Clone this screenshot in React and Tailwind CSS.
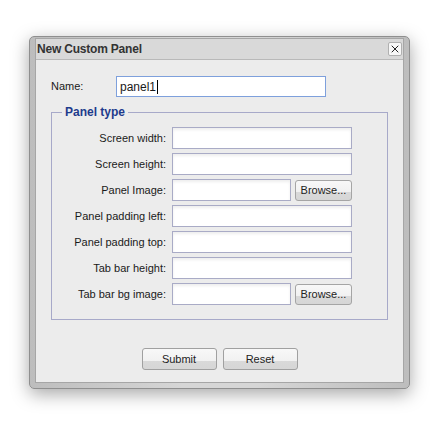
import { X } from 'lucide-react';

const rows = [
  { label: 'Screen width:' },
  { label: 'Screen height:' },
  { label: 'Panel Image:', browse: true },
  { label: 'Panel padding left:' },
  { label: 'Panel padding top:' },
  { label: 'Tab bar height:' },
  { label: 'Tab bar bg image:', browse: true },
];

const btnBg =
  'bg-[linear-gradient(#f8f8f8_0%,#f1f1f1_58%,#d9d9d9_58%,#d6d6d6_100%)]';

function Field({ short }) {
  return (
    <input
      type="text"
      className={`h-[22px] ${short ? 'w-[119px]' : 'w-[180px]'} border border-[#a9abc6] bg-white shadow-[inset_0_2px_3px_rgba(0,0,0,0.07)] outline-none`}
    />
  );
}

export default function App() {
  return (
    <div className="min-h-screen bg-white pt-[36px] pl-[29px] font-['Liberation_Sans',Arial,sans-serif] text-[11px] text-[#1a1a1a]">
      <div className="w-[381px] h-[353px] rounded-[5px] border border-[#8f8f8f] bg-[linear-gradient(90deg,#bdbdbd,#d6d6d6_40%,#d6d6d6_60%,#bdbdbd)] pt-[1px] px-[5px] pb-[5px] shadow-[0_5px_18px_rgba(0,0,0,0.35)]">
        <div className="h-full flex flex-col border border-[#a6a6a6]">
          <div className="h-[21px] flex items-center justify-between bg-[#d9d9d9] border-b border-[#b9b9b9] pl-[1px] pr-[1px]">
            <span className="font-bold text-[12px] text-[#333] tracking-[-0.2px]">New Custom Panel</span>
            <button className="w-[14px] h-[14px] flex items-center justify-center rounded-[2px] border border-[#b0b0b0] bg-[#f7f7f7]">
              <X className="w-[12px] h-[12px] text-[#222]" strokeWidth={2} />
            </button>
          </div>
          <div className="flex-1 bg-[#ececec] px-[15px] pt-[16px]">
            <div className="flex items-center">
              <span className="w-[65px]">Name:</span>
              <div className="w-[210px] h-[21px] flex items-center border border-[#7ea0dc] bg-white pl-[3px] text-[12px]">
                <span>panel1</span>
                <span className="w-px h-[14px] bg-black ml-[1px]" />
              </div>
            </div>
            <fieldset className="mt-[6px] border border-[#a7a9c9] pt-[6px] pb-[14px]">
              <legend className="ml-[10px] px-[3px] font-bold text-[12px] text-[#1e3b8c]">Panel type</legend>
              <div className="flex flex-col gap-[4px]">
                {rows.map((r) => (
                  <div key={r.label} className="flex items-center">
                    <span className="w-[114px] text-right">{r.label}</span>
                    <div className="ml-[6px] flex items-center gap-[4px]">
                      <Field short={r.browse} />
                      {r.browse && (
                        <button
                          className={`w-[57px] h-[21px] rounded-[3px] border border-[#a5a5a5] ${btnBg} text-[11px] text-[#222]`}
                        >
                          Browse...
                        </button>
                      )}
                    </div>
                  </div>
                ))}
              </div>
            </fieldset>
            <div className="mt-[28px] flex justify-center gap-[6px]">
              <button className={`w-[75px] h-[22px] rounded-[3px] border border-[#a0a0a0] ${btnBg} text-[#222]`}>
                Submit
              </button>
              <button className={`w-[75px] h-[22px] rounded-[3px] border border-[#a0a0a0] ${btnBg} text-[#222]`}>
                Reset
              </button>
            </div>
          </div>
        </div>
      </div>
    </div>
  );
}
